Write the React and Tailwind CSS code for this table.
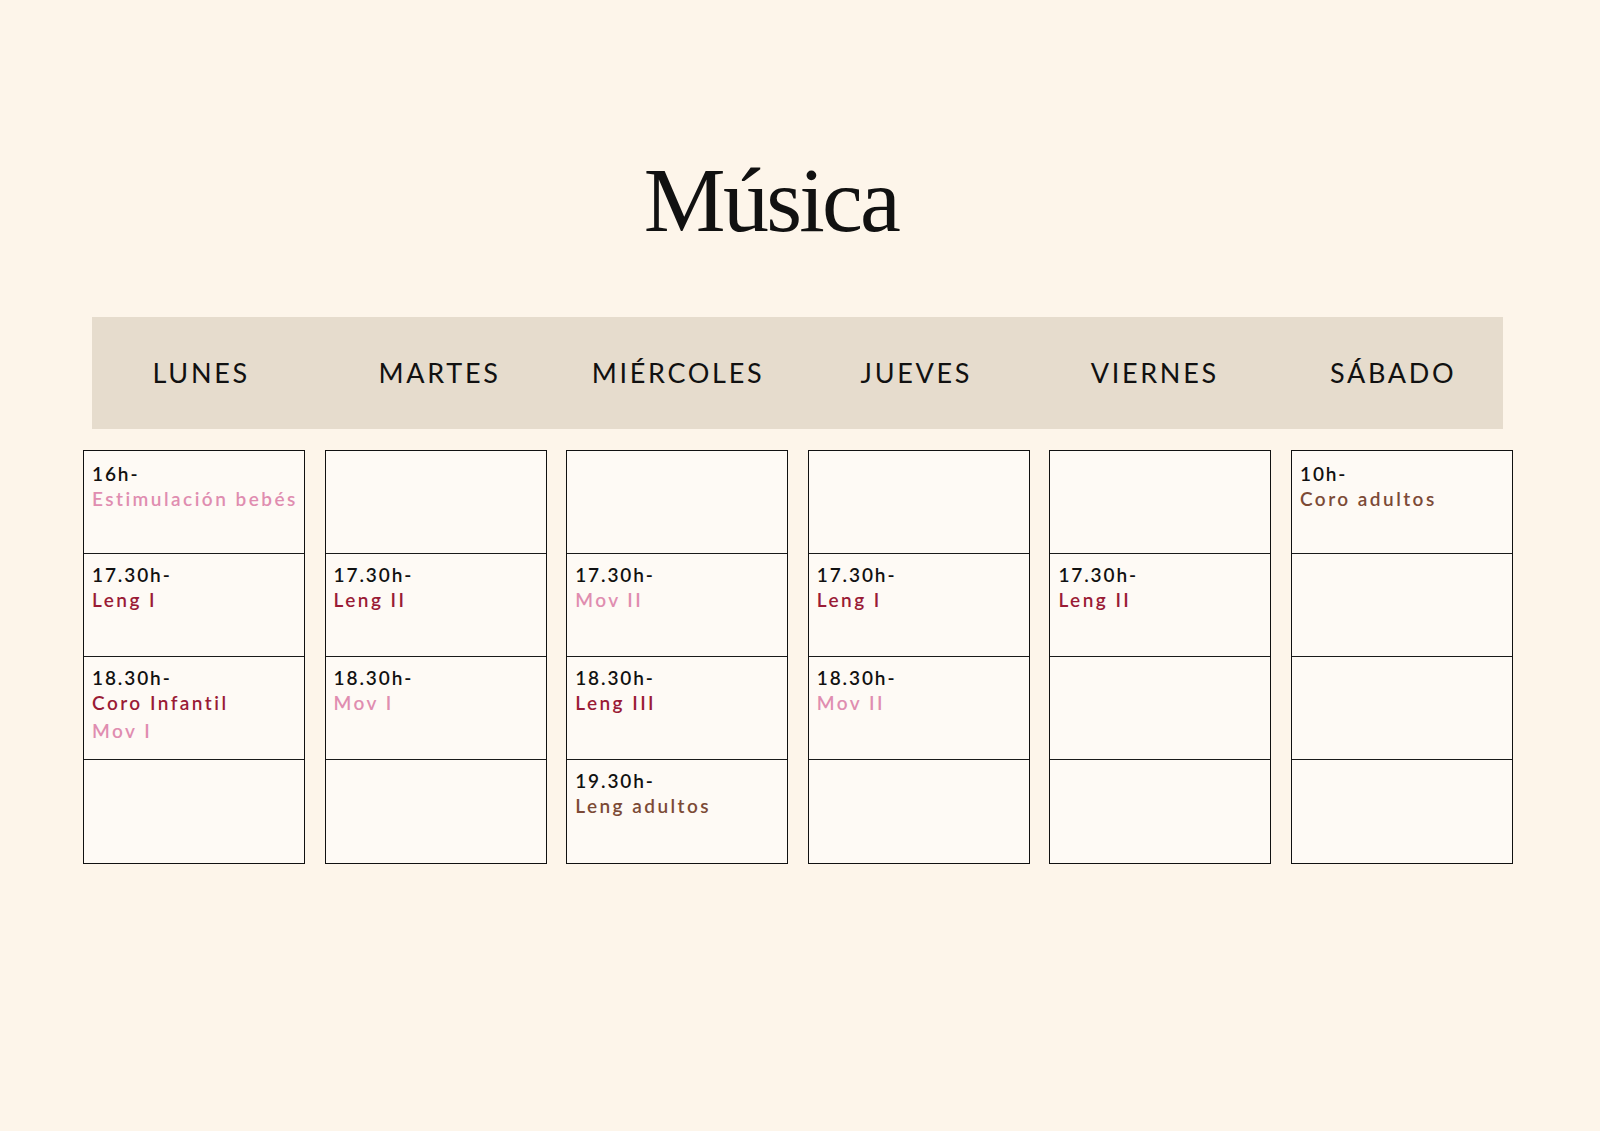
import React from 'react';

const days = ['LUNES', 'MARTES', 'MIÉRCOLES', 'JUEVES', 'VIERNES', 'SÁBADO'];

const PINK = 'text-[#e08db0]';
const RED = 'text-[#9a1b35]';
const BROWN = 'text-[#7c4a36]';

// each day: 4 slots, each slot either null or { time, items: [[label, colour]] }
const schedule = [
  [
    { time: '16h-', items: [['Estimulación bebés', PINK]] },
    { time: '17.30h-', items: [['Leng I', RED]] },
    { time: '18.30h-', items: [['Coro Infantil', RED], ['Mov I', PINK]] },
    null,
  ],
  [
    null,
    { time: '17.30h-', items: [['Leng II', RED]] },
    { time: '18.30h-', items: [['Mov I', PINK]] },
    null,
  ],
  [
    null,
    { time: '17.30h-', items: [['Mov II', PINK]] },
    { time: '18.30h-', items: [['Leng III', RED]] },
    { time: '19.30h-', items: [['Leng adultos', BROWN]] },
  ],
  [
    null,
    { time: '17.30h-', items: [['Leng I', RED]] },
    { time: '18.30h-', items: [['Mov II', PINK]] },
    null,
  ],
  [
    null,
    { time: '17.30h-', items: [['Leng II', RED]] },
    null,
    null,
  ],
  [
    { time: '10h-', items: [['Coro adultos', BROWN]] },
    null,
    null,
    null,
  ],
];

const Slot = ({ slot, last, first }) => (
  <div
    className={`h-[103px] whitespace-nowrap px-[8px] font-['Lato',sans-serif] text-[19px] leading-[25px] ${first ? 'pt-[10px]' : 'pt-[8px]'} ${last ? '' : 'border-b-[1.5px] border-[#1a1a1a]'}`}
  >
    {slot && (
      <>
        <div className="font-semibold tracking-[0.1em] text-[#111111]">{slot.time}</div>
        {slot.items.map(([label, colour], i) => (
          <div key={i} className={`${colour} font-semibold tracking-[0.13em] ${i > 0 ? 'mt-[3px]' : ''}`}>
            {label}
          </div>
        ))}
      </>
    )}
  </div>
);

export default function App() {
  return (
    <div className="min-h-[1131px] w-full bg-[#fdf5ea] pt-[150px]">
      {/* Title */}
      <div className="flex justify-center pr-[58px]">
        <h1 className="font-['Liberation_Serif',serif] text-[92px] leading-[100px] tracking-[-0.03em] text-[#111111]">
          Música
        </h1>
      </div>

      {/* Day header band */}
      <div className="ml-[92px] mt-[67px] flex h-[112px] w-[1411px] overflow-hidden bg-[#e6dccd]">
        <div className="-ml-[10px] flex">
          {days.map((d) => (
            <div
              key={d}
              className="flex w-[238.4px] shrink-0 items-center justify-center font-['Lato',sans-serif] text-[27px] tracking-[0.1em] text-[#111111]"
            >
              {d}
            </div>
          ))}
        </div>
      </div>

      {/* Columns */}
      <div className="ml-[83px] mt-[21px] flex gap-[19.6px]">
        {schedule.map((col, ci) => (
          <div key={ci} className="w-[222px] border-[1.5px] border-[#111111] bg-[#fefaf5]">
            {col.map((slot, si) => (
              <Slot key={si} slot={slot} first={si === 0} last={si === col.length - 1} />
            ))}
          </div>
        ))}
      </div>
    </div>
  );
}
